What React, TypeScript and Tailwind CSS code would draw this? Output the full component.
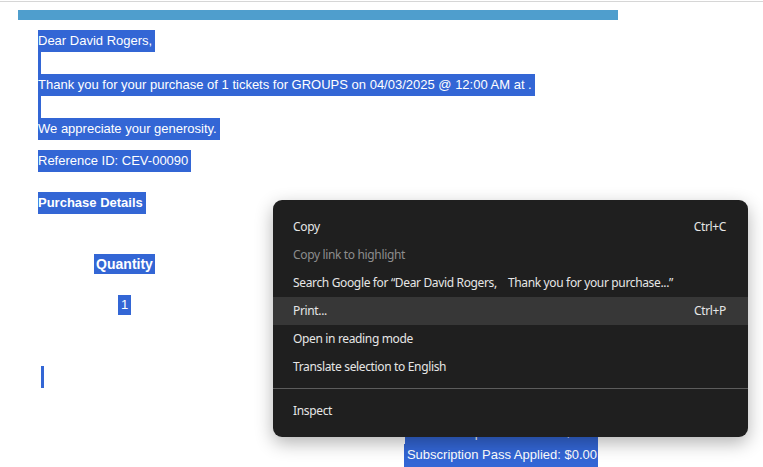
import React from "react";

const sel = "bg-[#3366d5] text-white";

function MenuItem({
  label,
  shortcut,
  disabled,
  active,
}: {
  label: string;
  shortcut?: string;
  disabled?: boolean;
  active?: boolean;
}) {
  return (
    <div
      className={`flex h-[28px] items-center justify-between pl-[20px] pr-[22px] ${
        active ? "bg-[#373737]" : ""
      }`}
    >
      <span className={disabled ? "text-[#8d8d8d]" : "text-[#e6e6e6]"}>{label}</span>
      {shortcut && <span className="text-[#e6e6e6]">{shortcut}</span>}
    </div>
  );
}

export default function App() {
  return (
    <div
      className="relative h-[467px] w-full overflow-hidden bg-white text-[13px]"
      style={{ fontFamily: '"Liberation Sans", Arial, sans-serif' }}
    >
      <div className="mt-[1px] h-[1px] w-full bg-[#d6d6d6]" />
      <div className="ml-[18px] w-[600px] pt-[8px]">
        <div className="h-[10px] bg-[#4f9ecd]" />
        <div className="flex flex-col items-start pl-[20px] pt-[10px] leading-[22px]">
          <span className={`${sel} h-[22px] pr-[3px]`}>Dear David Rogers,</span>
          <span className={`${sel} h-[22px] w-[3px]`} />
          <span className={`${sel} h-[22px] pr-[3px]`}>
            Thank you for your purchase of 1 tickets for GROUPS on 04/03/2025 @ 12:00 AM at .
          </span>
          <span className={`${sel} h-[22px] w-[3px]`} />
          <span className={`${sel} h-[22px] pr-[3px]`}>We appreciate your generosity.</span>
          <span className={`${sel} mt-[10px] h-[22px] pr-[3px]`}>Reference ID: CEV-00090</span>
          <span className={`${sel} mt-[20px] h-[22px] pr-[3px] font-bold`}>Purchase Details</span>
          <div className="mt-[40px] flex w-[173px] flex-col items-center leading-[20px]">
            <span className={`${sel} h-[20px] px-[2px] text-[14px] font-bold`}>Quantity</span>
            <span className={`${sel} mt-[21px] h-[20px] px-[3px]`}>1</span>
          </div>
          <span className={`${sel} ml-[3px] mt-[51px] h-[22px] w-[3px]`} />
        </div>
        <div className="mt-[34px] flex flex-col items-end pr-[20px] leading-[22px]">
          <span className={`${sel} h-[22px] pl-[27px] pr-[1px]`}>Subscription Discount: $0.00</span>
          <span className={`${sel} h-[23px] pl-[3px] pr-[1px]`}>Subscription Pass Applied: $0.00</span>
          <span className={`${sel} h-[22px] self-start ml-[386px] w-[51px]`} />
        </div>
      </div>

      <div
        className="absolute left-[273px] top-[200px] w-[475px] rounded-[9px] bg-[#1f1f1f] pb-[12px] pt-[13px] text-[12px] tracking-[-0.35px] shadow-[0_6px_18px_rgba(0,0,0,0.3)]"
        style={{ fontFamily: '"Noto Sans", "Open Sans", sans-serif' }}
      >
        <MenuItem label="Copy" shortcut="Ctrl+C" />
        <MenuItem label="Copy link to highlight" disabled />
        <MenuItem label={"Search Google for \u201CDear David Rogers,\u00A0\u00A0\u00A0\u00A0Thank you for your purchase...\u201D"} />
        <MenuItem label="Print..." shortcut="Ctrl+P" active />
        <MenuItem label="Open in reading mode" />
        <MenuItem label="Translate selection to English" />
        <div className="mb-[8px] mt-[7px] h-[1px] bg-[#5c5c5c]" />
        <MenuItem label="Inspect" />
      </div>
    </div>
  );
}
